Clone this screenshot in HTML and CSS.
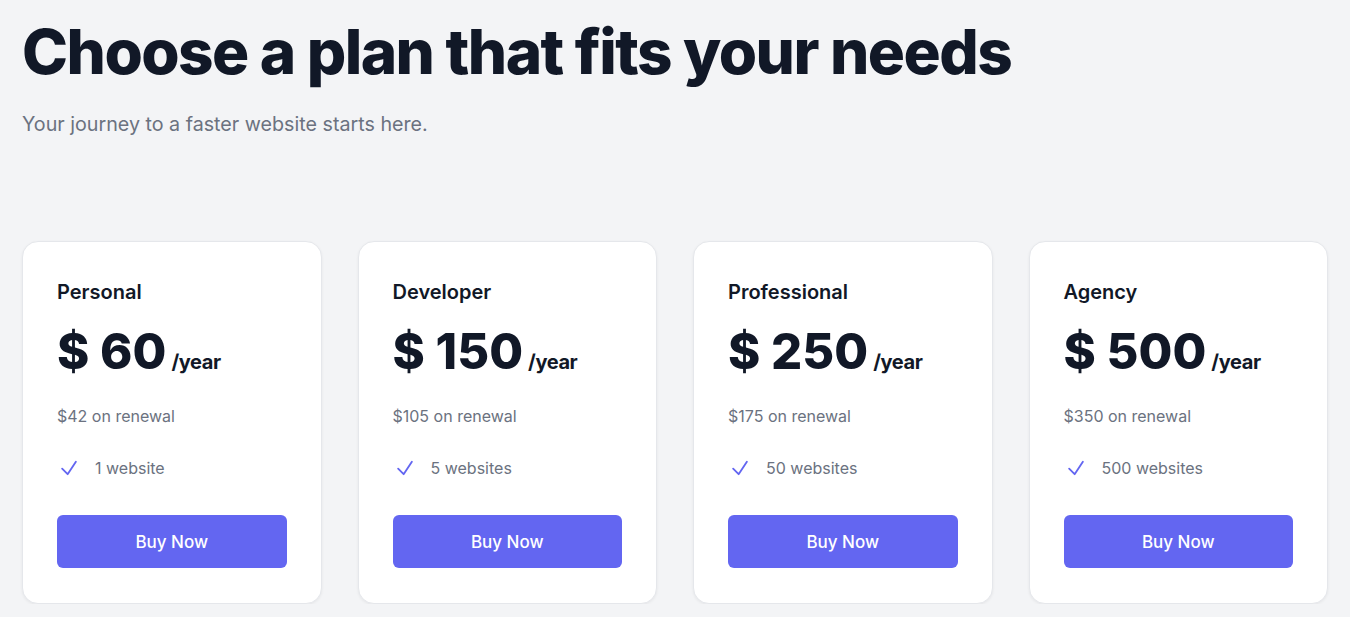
FILE: index.html
```html
<!DOCTYPE html>
<html lang="en">
<head>
    <meta charset="UTF-8">
    <meta name="viewport" content="width=device-width, initial-scale=1.0">
    <title>Pricing</title>
    <link rel="stylesheet" href="styles.css">
</head>
<body>
    <div class="pricing">
        <h1>Choose a plan that fits your needs</h1>
        <p class="subtitle">Your journey to a faster website starts here.</p>

        <div class="plans">
            <div class="plan">
                <h3>Personal</h3>
                <div class="price"><span class="amount">$ 60</span><span class="period">/year</span></div>
                <p class="renewal">$42 on renewal</p>
                <ul class="features">
                    <li>
                        <svg viewBox="0 0 24 24" width="22" height="22"><path d="M4.5 12.75l6 6 9-13.5" fill="none" stroke="currentColor" stroke-width="2" stroke-linecap="round" stroke-linejoin="round"/></svg>
                        1 website
                    </li>
                </ul>
                <button>Buy Now</button>
            </div>

            <div class="plan">
                <h3>Developer</h3>
                <div class="price"><span class="amount">$ 150</span><span class="period">/year</span></div>
                <p class="renewal">$105 on renewal</p>
                <ul class="features">
                    <li>
                        <svg viewBox="0 0 24 24" width="22" height="22"><path d="M4.5 12.75l6 6 9-13.5" fill="none" stroke="currentColor" stroke-width="2" stroke-linecap="round" stroke-linejoin="round"/></svg>
                        5 websites
                    </li>
                </ul>
                <button>Buy Now</button>
            </div>

            <div class="plan">
                <h3>Professional</h3>
                <div class="price"><span class="amount">$ 250</span><span class="period">/year</span></div>
                <p class="renewal">$175 on renewal</p>
                <ul class="features">
                    <li>
                        <svg viewBox="0 0 24 24" width="22" height="22"><path d="M4.5 12.75l6 6 9-13.5" fill="none" stroke="currentColor" stroke-width="2" stroke-linecap="round" stroke-linejoin="round"/></svg>
                        50 websites
                    </li>
                </ul>
                <button>Buy Now</button>
            </div>

            <div class="plan">
                <h3>Agency</h3>
                <div class="price"><span class="amount">$ 500</span><span class="period">/year</span></div>
                <p class="renewal">$350 on renewal</p>
                <ul class="features">
                    <li>
                        <svg viewBox="0 0 24 24" width="22" height="22"><path d="M4.5 12.75l6 6 9-13.5" fill="none" stroke="currentColor" stroke-width="2" stroke-linecap="round" stroke-linejoin="round"/></svg>
                        500 websites
                    </li>
                </ul>
                <button>Buy Now</button>
            </div>
        </div>
    </div>
</body>
</html>
```

FILE: styles.css
```css
body {
    font-family: Inter, "Noto Sans", sans-serif;
    background-color: #f3f4f6;
    color: #111827;
    margin: 0;
}

.pricing {
    padding: 18px 22px 0;
}

.pricing h1 {
    font-size: 62px;
    font-weight: 800;
    letter-spacing: -0.025em;
    line-height: 1.1;
    margin: 0;
}

.subtitle {
    font-size: 19.7px;
    color: #6b7280;
    margin: 26px 0 0;
}

.plans {
    display: grid;
    grid-template-columns: repeat(4, 1fr);
    gap: 36px;
    margin-top: 105px;
}

.plan {
    background-color: #fff;
    border: 1px solid #e5e7eb;
    border-radius: 16px;
    box-shadow: 0 1px 3px rgba(0, 0, 0, 0.06);
    padding: 36px 34px 35px;
}

.plan h3 {
    font-size: 20px;
    font-weight: 600;
    margin: 0;
    line-height: 28px;
}

.price {
    display: flex;
    align-items: baseline;
    margin-top: 16px;
}

.price .amount {
    font-size: 49px;
    font-weight: 800;
    line-height: 60px;
}

.price .period {
    font-size: 20px;
    font-weight: 700;
    margin-left: 5px;
    letter-spacing: -0.02em;
}

.renewal {
    font-size: 16px;
    color: #6b7280;
    margin: 24px 0 0;
}

.features {
    list-style: none;
    padding: 0;
    margin: 31px 0 0;
}

.features li {
    display: flex;
    align-items: center;
    gap: 15px;
    font-size: 16px;
    color: #6b7280;
}

.features svg {
    color: #6366f1;
    margin-left: 1px;
}

button {
    display: block;
    width: 100%;
    height: 53px;
    margin-top: 36px;
    background-color: #6366f1;
    border: none;
    border-radius: 6px;
    color: #fff;
    font-family: inherit;
    font-size: 17px;
    font-weight: 500;
    cursor: pointer;
}

button:hover {
    background-color: #4f46e5;
}
```
